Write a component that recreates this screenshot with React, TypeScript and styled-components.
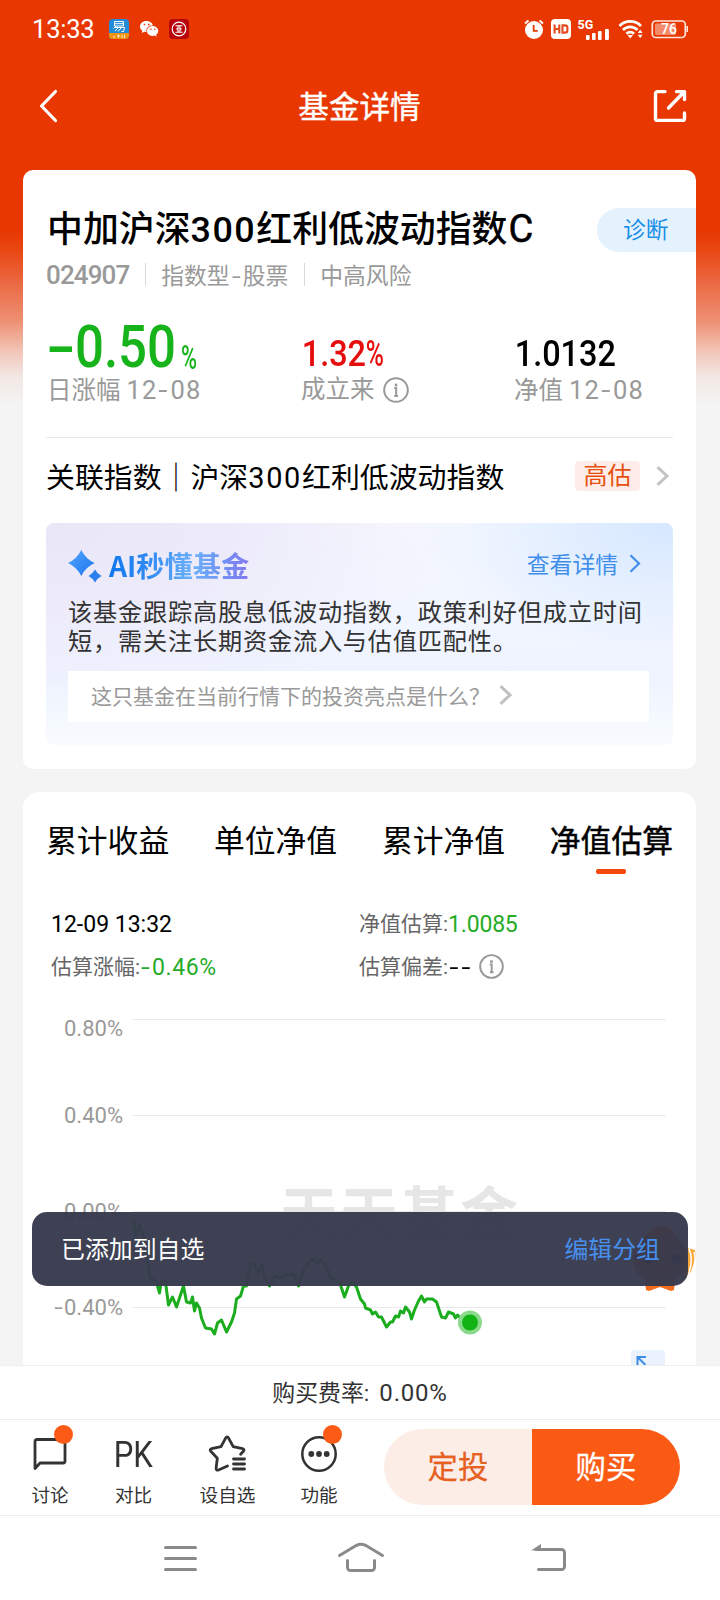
import React from "react";
import styled, { createGlobalStyle } from "styled-components";

const Global = createGlobalStyle`
  * { box-sizing: border-box; }
  body { margin: 0; background: #f4f4f4; }
  svg { display: block; flex: none; overflow: visible; }
`;

const Page = styled.div`
  position: relative;
  width: 720px;
  height: 1600px;
  overflow: hidden;
  display: flex;
  flex-direction: column;
  background: linear-gradient(#e83700 0, #e83700 230px, #e94713 250px, #ec7b5a 300px, #ee8e70 320px, #f2c3b5 350px, #f2e6e2 375px, #f4f4f4 405px);
  font-family: Roboto, "Noto Sans CJK SC", sans-serif;
  color: #000;
  white-space: nowrap;
`;

/* status bar */
const StatusBar = styled.div`
  display: flex;
  align-items: center;
  height: 58px;
  padding: 0 32px 0 32px;
  color: #fff;
`;
const Clock = styled.span`
  width: 77px;
  font-size: 25.5px;
  line-height: 30px;
  letter-spacing: -0.2px;
`;
const StatusGroup = styled.div`
  display: flex;
  align-items: center;
  gap: ${(p: { $gap?: number }) => p.$gap ?? 10}px;
  &:last-child { margin-left: auto; }
`;

/* title bar */
const TitleBar = styled.header`
  display: flex;
  align-items: center;
  justify-content: space-between;
  height: 112px;
  padding: 0 33px 16px 39px;
  color: #fff;
`;
const PageTitle = styled.h1`
  margin: 3px 0 0 7px;
  font-size: 30.6px;
  font-weight: 400;
  -webkit-text-stroke: 0.4px;
  line-height: 40px;
`;

const Content = styled.main`
  flex: 1;
  min-height: 0;
  overflow: hidden;
  display: flex;
  flex-direction: column;
  gap: 23px;
  padding: 0 24px 0 23px;
`;
const Card = styled.section`
  flex: none;
  overflow: hidden;
  background: #fff;
  border-radius: ${(p: { $radius: number }) => p.$radius}px;
`;
const SummaryCard = styled(Card)`
  height: 599px;
  padding: 36px 23px 0;
`;

const NameRow = styled.div`
  display: flex;
  align-items: center;
  justify-content: space-between;
  height: 46px;
  margin-right: -23px;
`;
const FundName = styled.h2`
  margin: 2px 0 0 1px;
  font-size: 35.9px;
  font-weight: 500;
  line-height: 46px;
`;
const Spaced = styled.span`
  letter-spacing: ${(p: { $ls: number }) => p.$ls}px;
`;
const ClassLetter = styled.span`
  margin-left: 1px;
  font-size: 38px;
  font-weight: 400;
  line-height: 40px;
  -webkit-text-stroke: 0.6px;
`;
const DiagnoseTag = styled.span`
  width: 99px;
  height: 44px;
  margin-top: 1px;
  padding-left: 26px;
  border-radius: 22px 0 0 22px;
  background: #e4f2fe;
  color: #1a8fe8;
  font-size: 22.8px;
  line-height: 45px;
`;
const MetaRow = styled.div`
  display: flex;
  align-items: center;
  height: 46px;
  padding-bottom: 1px;
  color: #999;
  font-size: 22.8px;
`;
const Code = styled.span`
  padding-top: 1px;
  font-weight: 500;
  font-size: 26px;
  letter-spacing: -0.9px;
`;
const Dash = styled.span`
  display: inline-block;
  width: ${(p: { $w: number; $stretch?: number }) => p.$w}px;
  text-align: center;
  transform: scaleX(${(p: { $w: number; $stretch?: number }) => p.$stretch ?? 1.4});
`;
const MetaDivider = styled.i`
  width: 1px;
  height: 23px;
  margin: 0 15px 0 16px;
  background: #d8d8d8;
`;

const Metrics = styled.div`
  display: grid;
  grid-template-columns: 254px 213px 1fr;
  height: 140px;
  padding-top: 12px;
  border-bottom: 1px solid #e8e8e8;
`;
const Metric = styled.div`
  display: flex;
  flex-direction: column;
`;
const MetricValue = styled.div`
  display: flex;
  align-items: flex-start;
  height: 64px;
  color: ${(p: { $color: string }) => p.$color};
`;
const BigNumber = styled.b`
  width: 135px;
  padding: 10px 0 0 1px;
  font-size: 60px;
  font-weight: 500;
  line-height: 54px;
  transform: scaleX(0.85);
  transform-origin: left;
`;
const SmallPercent = styled.b`
  padding-top: 34px;
  font-size: 33px;
  font-weight: 500;
  line-height: 28px;
  transform: scaleX(0.66);
  transform-origin: left;
`;
const MidNumber = styled.b`
  padding: 22px 0 0 2px;
  font-size: 37.5px;
  font-weight: 500;
  line-height: 42px;
  transform: scaleX(0.865);
  transform-origin: left;
`;
const NarrowPercent = styled.span`
  display: inline-block;
  transform: scaleX(0.76);
  transform-origin: left;
`;
const MetricLabel = styled.div`
  display: flex;
  align-items: center;
  gap: 8px;
  height: 32px;
  padding-left: 1px;
  color: #999;
  font-size: 24.5px;
  line-height: 28px;
`;
const LabelDate = styled.span`
  font-size: 25.5px;
  letter-spacing: 1.1px;
`;

const IndexRow = styled.div`
  display: flex;
  align-items: center;
  height: 85px;
  padding: 0 4px 9px 0;
  font-size: 28.9px;
`;
const IndexName = styled.span`
  padding-bottom: 2px;
`;
const Valuation = styled.span`
  width: 65px;
  height: 30px;
  margin: 0 16px 0 auto;
  border-radius: 4px;
  background: #fdece7;
  color: #e6500f;
  font-size: 24px;
  line-height: 30px;
  text-align: center;
`;

/* AI digest */
const AiPanel = styled.div`
  height: 222px;
  padding: 25px 24px 0 22px;
  border-radius: 8px;
  background:
    linear-gradient(to bottom, rgba(250, 252, 255, 0) 70%, #f9fcff 100%),
    radial-gradient(ellipse 260px 130px at 100% 0, #d5e7ff 0, rgba(224, 238, 255, 0) 100%),
    radial-gradient(ellipse 420px 190px at 0 0, #e9e6f8 0, #edebfa 45%, rgba(240, 243, 255, 0) 100%),
    linear-gradient(to bottom, #f7f9ff 0, #eff4ff 60%, #edf5ff 100%);
`;
const AiHeader = styled.div`
  display: flex;
  align-items: center;
  height: 36px;
`;
const AiTitle = styled.b`
  margin: -3px 0 0 7px;
  font-family: "Noto Sans CJK SC", sans-serif;
  font-size: 28.2px;
  line-height: 36px;
  color: transparent;
  background: linear-gradient(90deg, #0f78ee 0, #2f8af3 28%, #6bb0fb 60%, #6e97f5 78%, #8478f0 100%);
  background-clip: text;
`;
const AiLink = styled.span`
  display: flex;
  align-items: center;
  gap: 11px;
  margin: -5px 8px 0 auto;
  color: #3f8eec;
  font-size: 22.8px;
`;
const AiText = styled.p`
  margin: 15px 0 0;
  color: #333;
  font-size: 24.2px;
  line-height: 29px;
  letter-spacing: 0.8px;
`;
const AskBox = styled.div`
  display: flex;
  align-items: center;
  gap: 9px;
  height: 51px;
  margin-top: 14px;
  padding: 0 0 3px 23px;
  background: #fff;
  color: #999;
  font-size: 21px;
`;

/* estimate card */
const EstimateCard = styled(Card)`
  height: 620px;
  padding: 24px 23px 0 23px;
  border-radius: 16px 16px 0 0;
`;
const Tabs = styled.nav`
  display: flex;
  justify-content: space-between;
  height: 58px;
`;
const Tab = styled.div`
  display: flex;
  flex-direction: column;
  align-items: center;
  gap: 2px;
  font-size: 30.8px;
  line-height: 51px;
  -webkit-text-stroke: ${(p: { $active?: boolean }) => (p.$active ? 0.5 : 0)}px;
`;
const TabMark = styled.i`
  width: 30px;
  height: 5px;
  border-radius: 2px;
  background: #f4480c;
`;
const Facts = styled.div`
  display: grid;
  grid-template-columns: 308px 1fr;
  grid-auto-rows: 43px;
  padding: 28px 0 0 5px;
  font-size: 21px;
  color: #666;
`;
const Fact = styled.div`
  display: flex;
  align-items: center;
  padding-bottom: 3px;
`;
const FactValue = styled.span`
  padding-top: 4px;
  font-size: 23px;
  color: ${(p: { $color: string }) => p.$color};
  letter-spacing: ${(p: { $ls?: number }) => p.$ls ?? 0}px;
`;
const InfoSlot = styled.span`
  padding: 3px 0 0 ${(p: { $left: number }) => p.$left}px;
`;

const ChartArea = styled.div`
  position: relative;
  display: flex;
  height: 380px;
  margin-top: 20px;
`;
const AxisLabels = styled.div`
  display: flex;
  flex-direction: column;
  width: 77px;
  padding-top: 8px;
  color: #999;
  font-size: 22px;
  line-height: 26px;
  text-align: right;
`;
const AxisLabel = styled.span`
  margin-bottom: ${(p: { $gap: number }) => p.$gap}px;
`;
const Plot = styled.svg`
  margin-left: 10px;
`;
const ExpandButton = styled.div`
  position: absolute;
  left: 585px;
  top: 342px;
  width: 34px;
  height: 34px;
  padding: 5px;
  border-radius: 4px;
  background: #e9f2fd;
`;

const Mascot = styled.svg`
  position: absolute;
  left: 624px;
  top: 1220px;
`;
const Toast = styled.div`
  position: absolute;
  left: 32px;
  top: 1212px;
  width: 656px;
  height: 74px;
  display: flex;
  align-items: center;
  justify-content: space-between;
  padding: 0 28px 4px 29px;
  border-radius: 15px;
  background: rgba(54, 57, 76, 0.96);
  color: #fff;
  font-size: 23.9px;
`;
const ToastLink = styled.span`
  color: #468fee;
`;

/* bottom dock */
const FeeBar = styled.div`
  display: flex;
  align-items: center;
  justify-content: center;
  gap: 10px;
  height: 54px;
  padding-bottom: 3px;
  border-top: 1px solid #eee;
  background: #fff;
  color: #333;
  font-size: 22.9px;
`;
const FeeRate = styled.span`
  padding-top: 3px;
  font-size: 24px;
  letter-spacing: 0.8px;
`;
const ActionBar = styled.footer`
  display: flex;
  height: 97px;
  border: 1px solid #ececec;
  border-width: 1px 0;
  background: #fff;
`;
const Action = styled.div`
  position: relative;
  display: flex;
  flex-direction: column;
  align-items: center;
  width: ${(p: { $w: number }) => p.$w}px;
  padding-top: 14px;
  color: #333;
  font-size: 18.6px;
  line-height: 24px;
`;
const ActionIcon = styled.div`
  display: flex;
  align-items: center;
  justify-content: center;
  height: 40px;
  margin-bottom: 10px;
`;
const Pk = styled.span`
  padding-top: 2px;
  font-family: Roboto, sans-serif;
  font-size: 37px;
  line-height: 40px;
  transform: scaleX(0.84);
`;
const Badge = styled.i`
  position: absolute;
  top: 5px;
  left: calc(50% + 4px);
  width: 19px;
  height: 19px;
  border-radius: 50%;
  background: #fb5b16;
`;
const TradeButtons = styled.div`
  display: flex;
  width: 296px;
  height: 76px;
  margin: 9px 40px 0 auto;
  overflow: hidden;
  border-radius: 38px;
`;
const TradeButton = styled.div`
  flex: 1;
  color: ${(p: { $primary?: boolean }) => (p.$primary ? "#fff" : "#e6601f")};
  background: ${(p: { $primary?: boolean }) => (p.$primary ? "#fb5a14" : "#fceee7")};
  font-size: 30.4px;
  -webkit-text-stroke: 0.25px;
  line-height: 78px;
  text-align: center;
`;
const SystemNav = styled.div`
  display: flex;
  justify-content: space-between;
  height: 84px;
  padding: 25px 151px 0 162px;
  background: #fff;
`;
const HomeIcon = styled.svg`
  margin-right: 9px;
`;

const InfoIcon = ({ size }: { size: number }) => (
  <svg width={size} height={size} viewBox="0 0 26 26" fill="none" stroke="#999" strokeWidth="2">
    <circle cx="13" cy="13" r="11.8" />
    <path d="M11.200 11h2v8.500M11.300 19h3.800" strokeWidth="2" />
    <path d="M13 6.600v2.700" strokeWidth="2.600" />
  </svg>
);

const Chevron = ({ w, h, color, stroke }: { w: number; h: number; color: string; stroke: number }) => (
  <svg width={w} height={h} viewBox={`0 0 ${w} ${h}`} fill="none" stroke={color} strokeWidth={stroke}>
    <path d={`M1.5 1.2L${w - 2} ${h / 2}L1.5 ${h - 1.2}`} />
  </svg>
);

const LINE =
  "0,81 2,96 6,85 10,97 13,117 17,138 23,142 26,153 28,140 32,142 35,165 39,157 43,167 47,155 50,146 53,162 57,163 59,157 61,171 63,163 66,168 68,178 72,188 78,189 81,194 84,183 88,180 93,192 98,182 101,173 103,159 107,156 110,146 113,146 117,123 121,124 124,134 128,125 132,140 136,146 141,136 148,138 153,135 160,134 165,146 169,133 174,124 179,119 184,124 187,120 192,125 197,137 206,142 211,157 215,146 219,142 223,147 227,159 231,164 232,168 237,170 239,174 242,172 245,177 248,177 251,183 253,187 257,182 259,182 262,176 265,177 267,171 270,173 272,167 276,172 278,179 281,170 285,161 288,156 291,162 293,159 299,159 303,162 305,168 308,177 312,178 315,172 320,174 322,178 324,175 329,180 337,182";

export default function App() {
  return (
    <Page>
      <Global />
      <StatusBar>
        <Clock>13:33</Clock>
        <StatusGroup>
          <svg width="20" height="20" viewBox="0 0 20 20">
            <rect width="20" height="20" rx="4" fill="#248bd6" />
            <path d="M0 14h20v2a4 4 0 0 1-4 4H4a4 4 0 0 1-4-4z" fill="#f2930f" />
            <path d="M5.500 2.500h9v4.500h-9zM5.500 4.700h9M7 7L4.500 9.500M6 8.500h9.500l-1 4h-2M9.500 8.500L6 12M12.500 8.500L9 12.500" fill="none" stroke="#fff" strokeWidth="1" />
            <path d="M4 18h2M8 17h3M9.500 15.500v3M13 16v3M15.500 16v3" stroke="#fff" strokeWidth=".8" />
          </svg>
          <svg width="20" height="18" viewBox="0 0 20 18" fill="#fff">
            <path d="M7.500 1C3.700 1 1 3.400 1 6.500c0 1.800.9 3.200 2.300 4.200L2.800 13l2.500-1.300c.8.200 1.500.3 2.200.3-.9-4 2.400-6.800 6.500-6.700C13.300 2.800 10.700 1 7.500 1z" />
            <path d="M13.600 6.100c-3.200 0-5.600 2.200-5.600 4.900s2.400 4.900 5.600 4.900c.7 0 1.300-.1 1.900-.3l2.100 1.100-.5-1.900c1.300-.9 2.100-2.200 2.100-3.800 0-2.700-2.500-4.900-5.600-4.900z" />
            <path d="M4.700 4.500h1.500M9 4.500h1.500M11.300 9.300h1.200M15.200 9.300h1.200" stroke="#e83700" strokeWidth="1.4" />
          </svg>
          <svg width="20" height="20" viewBox="0 0 20 20">
            <rect width="20" height="20" rx="4" fill="#b8060f" />
            <circle cx="10" cy="10" r="6.800" fill="none" stroke="#fff" strokeWidth="1.200" />
            <path d="M6.500 6.800h7M6.500 13.200h7M9.100 7v2.500H7.500M10.900 7v2.500h1.600M9.100 13v-2.300H7.500M10.900 13v-2.300h1.600" fill="none" stroke="#fff" strokeWidth="1.100" />
          </svg>
        </StatusGroup>
        <StatusGroup $gap={6.5}>
          <svg width="20" height="20" viewBox="0 0 20 20" fill="none" stroke="#fff">
            <circle cx="10" cy="11" r="9" fill="#fff" stroke="none" />
            <path d="M1 4.500l3.500-3M19 4.500l-3.500-3" strokeWidth="2" />
            <path d="M9.700 6v5.800h4" stroke="#e83700" strokeWidth="1.8" />
          </svg>
          <svg width="20" height="20" viewBox="0 0 20 20">
            <rect width="20" height="20" rx="4" fill="#fff" />
            <path d="M3.600 5.500v9M8.300 5.500v9M3.600 10h4.700M11.500 6.400h2.300c1.700 0 2.600.9 2.600 2.200v2.800c0 1.300-.9 2.200-2.600 2.200h-2.300z" fill="none" stroke="#e04a1c" strokeWidth="2.1" />
          </svg>
          <svg width="34" height="21" viewBox="0 0 34 21" fill="#fff">
            <text x="0.500" y="10" fontFamily="Roboto, sans-serif" fontWeight="700" fontSize="12.500">5G</text>
            <rect x="9" y="16" width="3.600" height="5" rx="1" />
            <rect x="15" y="14" width="3.600" height="7" rx="1" />
            <rect x="21" y="12" width="3.600" height="9" rx="1" />
            <rect x="28" y="10" width="3.900" height="11" rx="1" />
          </svg>
          <svg width="26" height="20" viewBox="0 0 26 20" fill="none" stroke="#fff" strokeWidth="2.800">
            <path d="M1.500 7a15 15 0 0 1 21.500 0M5 11a10 10 0 0 1 14.500 0M8.500 14.700a5.500 5.500 0 0 1 7.500 0" />
            <path d="M9.500 16h5.500L12.200 19.500z" fill="#fff" stroke="none" />
            <path d="M19.800 14l2.400-3.500 2.400 3.500zM19.800 15.800l2.400 3.500 2.400-3.500z" fill="#fff" stroke="none" />
          </svg>
          <svg width="38" height="20" viewBox="0 0 38 20">
            <rect x="2.300" y="2" width="33" height="16.500" rx="3.500" fill="none" stroke="#fde5dc" strokeWidth="1.700" />
            <rect x="5" y="4.500" width="21" height="11.500" rx="1.500" fill="#f38b6b" />
            <path d="M37.200 7v6" stroke="#fde5dc" strokeWidth="1.600" />
            <text x="19" y="15.200" textAnchor="middle" fontFamily="Roboto, sans-serif" fontWeight="500" fontSize="14" fill="#fff">76</text>
          </svg>
        </StatusGroup>
      </StatusBar>

      <TitleBar>
        <svg width="20" height="34" viewBox="0 0 20 34" fill="none" stroke="#fff" strokeWidth="3.200" strokeLinecap="round" strokeLinejoin="round">
          <path d="M16.500 2.500L2.500 17l14 14.500" />
        </svg>
        <PageTitle>基金详情</PageTitle>
        <svg width="34" height="34" viewBox="0 0 34 34" fill="none" stroke="#fff" strokeWidth="3.400" strokeLinecap="round" strokeLinejoin="round">
          <path d="M12 2.600H4.500a2 2 0 0 0-2 2v24.800a2 2 0 0 0 2 2h25a2 2 0 0 0 2-2v-5.400" />
          <path d="M15.500 19L31 3M23.500 2.600h8v7.900" />
        </svg>
      </TitleBar>

      <Content>
        <SummaryCard $radius={10}>
          <NameRow>
            <FundName>中加沪深<Spaced $ls={1.5}>300</Spaced>红利低波动指数<ClassLetter>C</ClassLetter></FundName>
            <DiagnoseTag>诊断</DiagnoseTag>
          </NameRow>
          <MetaRow>
            <Code>024907</Code>
            <MetaDivider />
            <span>指数型<Dash $w={13}>-</Dash>股票</span>
            <MetaDivider />
            <span>中高风险</span>
          </MetaRow>
          <Metrics>
            <Metric>
              <MetricValue $color="#17b31a">
                <BigNumber><Dash $w={33} $stretch={1.7}>-</Dash>0.50</BigNumber>
                <SmallPercent>%</SmallPercent>
              </MetricValue>
              <MetricLabel><span>日涨幅 <LabelDate>12<Dash $w={13} $stretch={1.3}>-</Dash>08</LabelDate></span></MetricLabel>
            </Metric>
            <Metric>
              <MetricValue $color="#e60d0d"><MidNumber>1.32<NarrowPercent>%</NarrowPercent></MidNumber></MetricValue>
              <MetricLabel>成立来 <InfoIcon size={26} /></MetricLabel>
            </Metric>
            <Metric>
              <MetricValue $color="#000"><MidNumber>1.0132</MidNumber></MetricValue>
              <MetricLabel><span>净值 <LabelDate>12<Dash $w={13} $stretch={1.3}>-</Dash>08</LabelDate></span></MetricLabel>
            </Metric>
          </Metrics>
          <IndexRow>
            <IndexName>关联指数｜沪深<Spaced $ls={1.7}>300</Spaced>红利低波动指数</IndexName>
            <Valuation>高估</Valuation>
            <Chevron w={13} h={20} color="#c4c4c4" stroke={3} />
          </IndexRow>
          <AiPanel>
            <AiHeader>
              <svg width="34" height="34" viewBox="0 0 34 34">
                <defs>
                  <linearGradient id="spark" x1="0" y1="0" x2="1" y2="1">
                    <stop offset="0" stopColor="#57a7fb" />
                    <stop offset="1" stopColor="#1973f0" />
                  </linearGradient>
                </defs>
                <path d="M13.300 1Q17.500 9.800 26.600 14Q17.500 18.200 13.300 27Q9 18.200 0 14Q9 9.800 13.300 1z" fill="url(#spark)" />
                <path d="M27 20.500Q29.200 24.800 33.500 27Q29.200 29.200 27 33.500Q24.800 29.200 20.500 27Q24.800 24.800 27 20.500z" fill="#2c80ee" />
              </svg>
              <AiTitle>AI秒懂基金</AiTitle>
              <AiLink>查看详情 <Chevron w={12} h={19} color="#3f8eec" stroke={2.2} /></AiLink>
            </AiHeader>
            <AiText>该基金跟踪高股息低波动指数，政策利好但成立时间<br />短，需关注长期资金流入与估值匹配性。</AiText>
            <AskBox>这只基金在当前行情下的投资亮点是什么？<Chevron w={13} h={20} color="#c0c0c0" stroke={3} /></AskBox>
          </AiPanel>
        </SummaryCard>

        <EstimateCard $radius={16}>
          <Tabs>
            <Tab>累计收益</Tab>
            <Tab>单位净值</Tab>
            <Tab>累计净值</Tab>
            <Tab $active>净值估算<TabMark /></Tab>
          </Tabs>
          <Facts>
            <Fact><FactValue $color="#000">12-09 13:32</FactValue></Fact>
            <Fact>净值估算:<FactValue $color="#25ab28" $ls={-0.2}>1.0085</FactValue></Fact>
            <Fact>估算涨幅:<FactValue $color="#25ab28" $ls={0.6}><Dash $w={12}>-</Dash>0.46%</FactValue></Fact>
            <Fact>
              估算偏差:
              <FactValue $color="#000"><Dash $w={12}>-</Dash><Dash $w={12}>-</Dash></FactValue>
              <InfoSlot $left={7}><InfoIcon size={25} /></InfoSlot>
            </Fact>
          </Facts>
          <ChartArea>
            <AxisLabels>
              <AxisLabel $gap={61}>0.80%</AxisLabel>
              <AxisLabel $gap={70}>0.40%</AxisLabel>
              <AxisLabel $gap={70}>0.00%</AxisLabel>
              <AxisLabel $gap={0}><Dash $w={11}>-</Dash>0.40%</AxisLabel>
            </AxisLabels>
            <Plot width="532" height="380" viewBox="0 0 532 380">
              <g stroke="#ebebeb">
                <path d="M0 11.500h533M0 107.500h533M0 203.500h533M0 299.500h533" />
              </g>
              <text x="147" y="227" fontFamily="Noto Sans CJK SC, sans-serif" fontWeight="700" fontSize="58" letterSpacing="2" fill="#e6e6e6">天天基金</text>
              <polyline transform="translate(0.500 132)" points={LINE} fill="none" stroke="#1bad1e" strokeWidth="3" strokeLinejoin="round" />
              <circle cx="337" cy="314.500" r="12" fill="#8bda8c" />
              <circle cx="337" cy="314.500" r="8" fill="#13b314" />
            </Plot>
            <ExpandButton>
              <svg width="24" height="24" viewBox="0 0 24 24" fill="none" stroke="#3d8de4" strokeWidth="2">
                <path d="M1.500 11V2h8.500M2 2.500l7.500 7.500" />
              </svg>
            </ExpandButton>
          </ChartArea>
        </EstimateCard>
      </Content>

      <FeeBar>购买费率:<FeeRate>0.00%</FeeRate></FeeBar>
      <ActionBar>
        <Action $w={100}>
          <ActionIcon>
            <svg width="34" height="34" viewBox="0 0 34 34" fill="none" stroke="#333" strokeWidth="2.800" strokeLinejoin="round">
              <path d="M2 31.500V4.500a2 2 0 0 1 2-2h26a2 2 0 0 1 2 2V24a2 2 0 0 1-2 2H7z" />
            </svg>
          </ActionIcon>
          讨论
          <Badge />
        </Action>
        <Action $w={67}>
          <ActionIcon><Pk>PK</Pk></ActionIcon>
          对比
        </Action>
        <Action $w={121}>
          <ActionIcon>
            <svg width="38" height="36" viewBox="0 0 38 36" fill="none" stroke="#333" strokeWidth="2.800" strokeLinejoin="round" strokeLinecap="round">
              <path d="M18.500 30l-9 4c-1.500.600-2.600-.200-2.400-1.700l1.200-10-6.500-7c-1-1.100-.600-2.400.900-2.700l9.300-2 4.600-8.500c.8-1.500 2.200-1.500 3 0l4.600 8.500 9.300 2c1.500.3 2 1.500.9 2.700l-2.800 3" />
              <path d="M24.500 23h11M24.500 28h11M24.500 33h11" />
            </svg>
          </ActionIcon>
          设自选
        </Action>
        <Action $w={62}>
          <ActionIcon>
            <svg width="38" height="38" viewBox="0 0 38 38" fill="#333">
              <circle cx="19" cy="19" r="16.700" fill="none" stroke="#333" strokeWidth="2.500" />
              <circle cx="11.300" cy="19" r="2.900" />
              <circle cx="19" cy="19" r="2.900" />
              <circle cx="26.700" cy="19" r="2.900" />
            </svg>
          </ActionIcon>
          功能
          <Badge />
        </Action>
        <TradeButtons>
          <TradeButton>定投</TradeButton>
          <TradeButton $primary>购买</TradeButton>
        </TradeButtons>
      </ActionBar>
      <SystemNav>
        <svg width="37" height="34" viewBox="0 0 37 34" stroke="#8a8a8a" strokeWidth="3" strokeLinecap="round">
          <path d="M3.500 6.500h30M3.500 17.500h30M3.500 28.500h30" />
        </svg>
        <HomeIcon width="50" height="34" viewBox="0 0 50 34" fill="none" stroke="#8a8a8a" strokeWidth="3" strokeLinecap="round">
          <path d="M3.500 14.500L20.500 4.300Q25 2 29.500 4.300L46.500 14.500" />
          <path d="M11.500 19.500v7a3 3 0 0 0 3 3h21a3 3 0 0 0 3-3v-7" />
        </HomeIcon>
        <svg width="38" height="34" viewBox="0 0 38 34" fill="none" stroke="#8a8a8a" strokeWidth="3" strokeLinecap="round">
          <path d="M5 8.500h25.500a3 3 0 0 1 3 3v14a3 3 0 0 1-3 3H7.500" />
          <path d="M0 9.500L10 3v6z" fill="#8a8a8a" stroke="none" />
        </svg>
      </SystemNav>

      <Mascot width="76" height="74" viewBox="0 0 76 74">
        <path d="M58 60Q74 50 71 30L63 28z" fill="#f7a93b" />
        <path d="M65 29q5 10-1 27M70 32q3 9-2 18" fill="none" stroke="#fff" strokeWidth="1.500" />
        <circle cx="36" cy="38" r="27" fill="#c9713f" />
        <path d="M24 16q4-13 14-10 12-1 12 12z" fill="#ef4a22" />
        <circle cx="25" cy="39" r="5" fill="#20243a" />
        <circle cx="52" cy="39" r="5" fill="#20243a" />
        <path d="M32 46h13l-6 6z" fill="#ef4a22" />
        <path d="M36 65L21 60l1 10 3 1 11-4 11 4 3-1 1-10z" fill="#f36c1e" />
      </Mascot>
      <Toast>
        <span>已添加到自选</span>
        <ToastLink>编辑分组</ToastLink>
      </Toast>
    </Page>
  );
}
